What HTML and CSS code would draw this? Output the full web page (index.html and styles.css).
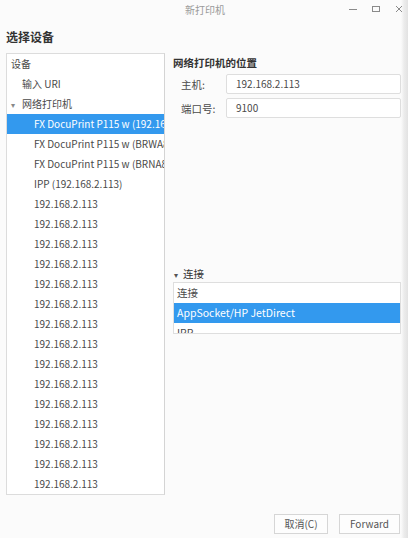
FILE: index.html
```html
<!DOCTYPE html>
<html lang="zh-CN">
<head>
<meta charset="utf-8">
<title>新打印机</title>
<link rel="stylesheet" href="styles.css">
</head>
<body>
<div class="window">
  <div class="titlebar">
    <span class="title">新打印机</span>
    <div class="controls">
      <svg class="ctl" width="10" height="10" viewBox="0 0 10 10"><path d="M1 5.5h8" stroke="#8a8a8a" stroke-width="1"/></svg>
      <svg class="ctl" width="10" height="10" viewBox="0 0 10 10"><rect x="1.5" y="2.5" width="7" height="5" fill="none" stroke="#8a8a8a" stroke-width="1"/></svg>
      <svg class="ctl" width="10" height="10" viewBox="0 0 10 10"><path d="M2 2l6 6M8 2l-6 6" stroke="#8a8a8a" stroke-width="1"/></svg>
    </div>
  </div>
  <h1 class="heading">选择设备</h1>
  <div class="main">
    <div class="devlist">
      <div class="row lvl0">设备</div>
      <div class="row lvl1">输入 URI</div>
      <div class="row lvl0"><span class="arrow">▾</span>网络打印机</div>
      <div class="row lvl2 sel">FX DocuPrint P115 w (192.168.2.113)</div>
      <div class="row lvl2">FX DocuPrint P115 w (BRWA8A795E1234)</div>
      <div class="row lvl2">FX DocuPrint P115 w (BRNA8A795E1234)</div>
      <div class="row lvl2">IPP (192.168.2.113)</div>
      <div class="row lvl2">192.168.2.113</div>
      <div class="row lvl2">192.168.2.113</div>
      <div class="row lvl2">192.168.2.113</div>
      <div class="row lvl2">192.168.2.113</div>
      <div class="row lvl2">192.168.2.113</div>
      <div class="row lvl2">192.168.2.113</div>
      <div class="row lvl2">192.168.2.113</div>
      <div class="row lvl2">192.168.2.113</div>
      <div class="row lvl2">192.168.2.113</div>
      <div class="row lvl2">192.168.2.113</div>
      <div class="row lvl2">192.168.2.113</div>
      <div class="row lvl2">192.168.2.113</div>
      <div class="row lvl2">192.168.2.113</div>
      <div class="row lvl2">192.168.2.113</div>
      <div class="row lvl2">192.168.2.113</div>
    </div>
    <div class="panel">
      <div class="section-title">网络打印机的位置</div>
      <div class="field">
        <span class="label">主机:</span>
        <div class="input">192.168.2.113</div>
      </div>
      <div class="field">
        <span class="label">端口号:</span>
        <div class="input">9100</div>
      </div>
      <div class="expander"><span class="arrow">▾</span>连接</div>
      <div class="connlist">
        <div class="crow">连接</div>
        <div class="crow sel">AppSocket/HP JetDirect</div>
        <div class="crow">IPP</div>
      </div>
    </div>
  </div>
  <div class="footer">
    <div class="btn cancel">取消(C)</div>
    <div class="btn fwd">Forward</div>
  </div>
</div>
</body>
</html>
```

FILE: styles.css
```css
html, body {
  margin: 0;
  padding: 0;
}
body {
  width: 408px;
  height: 538px;
  overflow: hidden;
  background: linear-gradient(to right, #fbfbfb 0, #fbfbfb 401px, #ececec 404px, #e2e2e2 408px);
  font-family: "Noto Sans CJK SC", "Noto Sans", sans-serif;
  font-size: 10px;
  color: #4a4a4a;
}
.window {
  width: 408px;
  height: 538px;
  display: flex;
  flex-direction: column;
}
.titlebar {
  height: 19px;
  display: flex;
  align-items: center;
  justify-content: center;
  position: relative;
}
.title {
  color: #9a9a9a;
  font-size: 10px;
  padding-left: 2px;
}
.controls {
  position: absolute;
  right: 4px;
  top: 4px;
  display: flex;
  gap: 13px;
}
.ctl {
  display: block;
}
.heading {
  margin: 8px 0 0 6px;
  height: 26px;
  font-size: 12px;
  font-weight: bold;
  color: #333;
  line-height: 20px;
}
.main {
  display: flex;
  gap: 8px;
  padding-left: 6px;
}
.devlist {
  width: 157px;
  height: 440px;
  border: 1px solid #dcdcdc;
  border-right-color: #d4d4d4;
  background: #fff;
  overflow: hidden;
}
.row {
  height: 20px;
  line-height: 20px;
  white-space: nowrap;
  overflow: hidden;
}
.lvl0 { padding-left: 4px; }
.lvl1 { padding-left: 15px; }
.lvl2 { padding-left: 27px; }
.row .arrow, .expander .arrow {
  display: inline-block;
  width: 11px;
  font-size: 8px;
  color: #888;
}
.sel {
  background: #3399ee;
  color: #fff;
}
.panel {
  flex: 1;
  padding-right: 7px;
  display: flex;
  flex-direction: column;
}
.section-title {
  margin-top: 1px;
  height: 20px;
  line-height: 18px;
  font-size: 10.5px;
  font-weight: bold;
  color: #333;
}
.field {
  display: flex;
  align-items: center;
  height: 20px;
  margin-bottom: 4px;
}
.label {
  width: 53px;
  padding-left: 8px;
  box-sizing: border-box;
  font-size: 10.5px;
}
.input {
  flex: 1;
  height: 18px;
  line-height: 18px;
  border: 1px solid #dedede;
  border-radius: 2px;
  background: #fff;
  padding-left: 9px;
}
.expander {
  margin-top: 144px;
  height: 16px;
  line-height: 16px;
  padding-left: 1px;
  color: #333;
  font-size: 10.5px;
}
.expander .arrow {
  width: 9px;
  color: #555;
}
.connlist {
  height: 50px;
  border: 1px solid #dedede;
  background: #fff;
  overflow: hidden;
}
.crow {
  height: 20px;
  line-height: 20px;
  padding-left: 3px;
  white-space: nowrap;
  font-size: 10.5px;
}
.footer {
  margin-top: auto;
  display: flex;
  justify-content: flex-end;
  gap: 11px;
  padding: 0 8px 4px 0;
}
.btn {
  height: 18px;
  line-height: 18px;
  border: 1px solid #d6d6d6;
  background: #fdfdfd;
  text-align: center;
  color: #555;
}
.cancel { width: 52px; }
.fwd { width: 59px; }
```
